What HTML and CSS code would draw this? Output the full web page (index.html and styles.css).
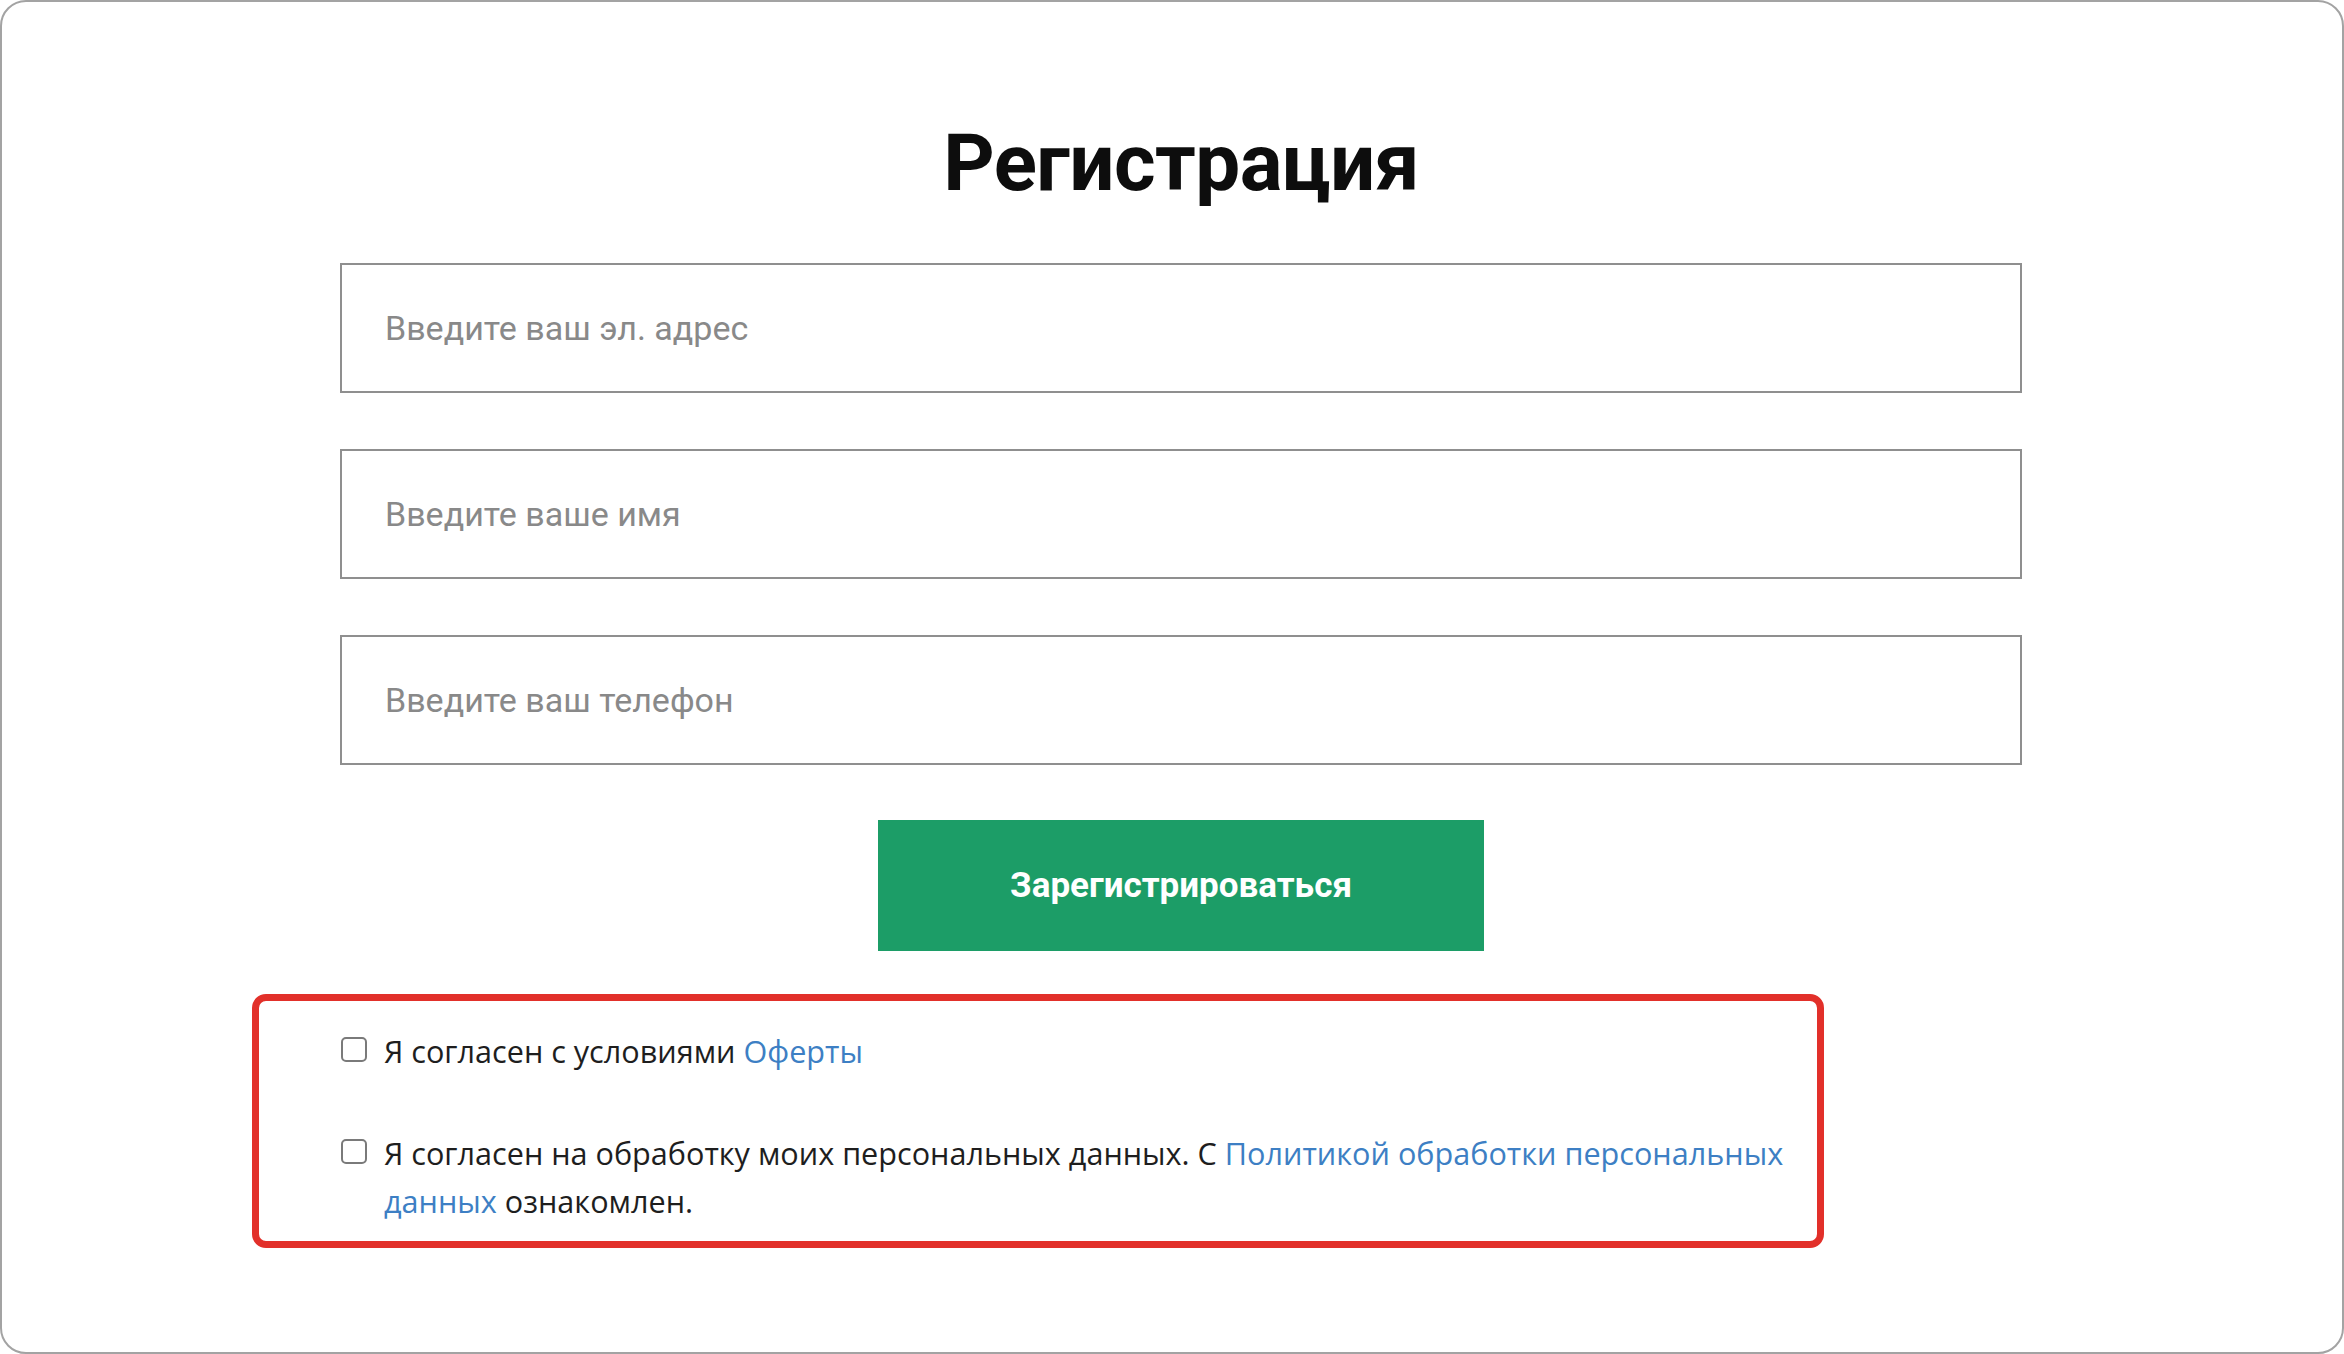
FILE: index.html
```html
<!DOCTYPE html>
<html lang="ru">
<head>
<meta charset="utf-8">
<title>Регистрация</title>
<link rel="stylesheet" href="styles.css">
</head>
<body>
<div class="frame">
  <form class="form">
    <h1 class="title">Регистрация</h1>
    <input class="field" type="email" placeholder="Введите ваш эл. адрес">
    <input class="field" type="text" placeholder="Введите ваше имя">
    <input class="field" type="tel" placeholder="Введите ваш телефон">
    <button class="submit" type="button">Зарегистрироваться</button>
    <div class="consents">
      <label class="consent">
        <input class="check" type="checkbox">
        <span class="consent-text">Я согласен с условиями <a class="link" href="#">Оферты</a></span>
      </label>
      <label class="consent consent-second">
        <input class="check" type="checkbox">
        <span class="consent-text">Я согласен на обработку моих персональных данных. С <a class="link" href="#">Политикой обработки персональных данных</a> ознакомлен.</span>
      </label>
    </div>
  </form>
</div>
</body>
</html>
```
FILE: styles.css
```css
* { box-sizing: border-box; }
html, body { margin: 0; padding: 0; background: #ffffff; }
.frame {
  width: 2344px;
  height: 1354px;
  border: 2px solid #a3a3a3;
  border-radius: 26px;
  background: #ffffff;
  overflow: hidden;
}
.form {
  width: 1682px;
  margin-left: 338px;
  display: flex;
  flex-direction: column;
  align-items: center;
}
.title {
  margin: 114px 0 0 0;
  font-family: Roboto, "Noto Sans", sans-serif;
  font-weight: 700;
  font-size: 80px;
  line-height: 94px;
  color: #0d0d0d;
  letter-spacing: -0.6px;
}
.field {
  width: 100%;
  height: 130px;
  margin: 0;
  border: 2px solid #8f8f8f;
  border-radius: 0;
  padding: 0 0 0 43px;
  font-family: Roboto, "Noto Sans", sans-serif;
  font-size: 34px;
  color: #333;
  background: #fff;
  outline: none;
}
.title + .field { margin-top: 53px; }
.field + .field { margin-top: 56px; }
.field::placeholder { color: #898989; }
.submit {
  margin-top: 55px;
  width: 606px;
  height: 131px;
  border: none;
  border-radius: 0;
  background: #1c9d67;
  color: #ffffff;
  font-family: Roboto, "Noto Sans", sans-serif;
  font-weight: 700;
  font-size: 35px;
  cursor: pointer;
}
.consents {
  align-self: flex-start;
  margin-top: 43px;
  margin-left: -88px;
  width: 1572px;
  border: 7px solid #e2302a;
  border-radius: 14px;
  padding: 26px 18px 16px 82px;
}
.consent {
  display: flex;
  align-items: flex-start;
  gap: 17px;
  font-family: "Open Sans", "Noto Sans", sans-serif;
  font-size: 30.6px;
  line-height: 48px;
  color: #1e1e1e;
}
.consent-second { margin-top: 54px; }
.check {
  appearance: none;
  -webkit-appearance: none;
  flex: none;
  width: 26px;
  height: 25px;
  margin: 10px 0 0 0;
  border: 2px solid #7a7a7a;
  border-radius: 5px;
  background: #fff;
}
.consent-text { max-width: 1425px; }
.link { color: #3d7fc4; text-decoration: none; }
```
